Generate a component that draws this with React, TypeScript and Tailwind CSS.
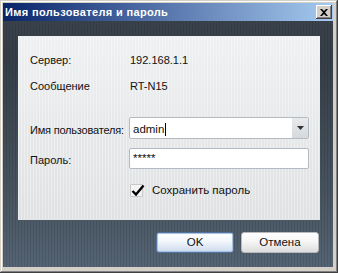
import React from "react";

export default function App() {
  return (
    <div
      className="w-[338px] h-[273px] bg-[#d4d0c8] flex flex-col pt-[3px] pl-[3px] pr-[5px] pb-[6px] shadow-[inset_-1px_-1px_0_#404040,inset_1px_1px_0_#d4d0c8,inset_-2px_-2px_0_#808080,inset_2px_2px_0_#ffffff]"
      style={{ fontFamily: '"Liberation Sans", Arial, sans-serif' }}
    >
      {/* Title bar */}
      <div className="h-[18px] flex items-center justify-between pl-[2px] pr-[1px] bg-[linear-gradient(to_right,#0a246a,#a6caf0)]">
        <span className="text-white font-bold text-[11px] tracking-[0.35px] leading-none">
          Имя пользователя и пароль
        </span>
        <div className="w-[16px] h-[14px] bg-[#d4d0c8] flex items-center justify-center shadow-[inset_-1px_-1px_0_#404040,inset_1px_1px_0_#ffffff,inset_-2px_-2px_0_#808080]">
          <svg width="8" height="7" viewBox="0 0 8 7">
            <path d="M0 0h2l2 2 2-2h2L5 3.5 8 7H6L4 5 2 7H0l3-3.5z" fill="#000" />
          </svg>
        </div>
      </div>

      {/* Dark textured area */}
      <div className="flex-1 flex flex-col pt-[15px] pl-[15px] bg-[repeating-linear-gradient(90deg,rgba(0,0,0,0.10)_0px,rgba(0,0,0,0.10)_1px,transparent_1px,transparent_3px),linear-gradient(to_bottom,#3a424b,#353e48_15%,#47545f_70%,#556474)]">
        {/* Light panel */}
        <div className="w-[302px] h-[184px] flex flex-col text-[11px] text-[#111] bg-[repeating-linear-gradient(90deg,rgba(255,255,255,0.35)_0px,rgba(255,255,255,0.35)_1px,transparent_1px,transparent_3px),linear-gradient(to_bottom,#eef0f1,#e6e8ea_50%,#dfe1e3)]">
          <div className="h-[16px] mt-[16px] flex items-center">
            <span className="w-[112px] shrink-0 pl-[12px]">Сервер:</span>
            <span>192.168.1.1</span>
          </div>
          <div className="h-[16px] mt-[10px] flex items-center">
            <span className="w-[112px] shrink-0 pl-[12px]">Сообщение</span>
            <span>RT-N15</span>
          </div>
          <div className="h-[22px] mt-[23px] flex items-center">
            <span className="w-[111px] shrink-0 pl-[12px] pt-[5px] whitespace-nowrap tracking-[-0.2px]">Имя пользователя:</span>
            <div className="w-[180px] h-[22px] bg-white border border-[#b4bac2] rounded-[2px] flex items-stretch">
              <div className="flex-1 flex items-center pl-[3px] pt-[3px] text-[11.5px]">
                admin<span className="inline-block w-[1px] h-[13px] bg-black ml-[1px]" />
              </div>
              <div className="w-[16px] bg-[linear-gradient(to_bottom,#e8eaec,#d6d9dc)] flex items-center justify-center">
                <svg width="7" height="4" viewBox="0 0 7 4">
                  <path d="M0 0h7L3.5 4z" fill="#333" />
                </svg>
              </div>
            </div>
          </div>
          <div className="h-[21px] mt-[9px] flex items-center">
            <span className="w-[111px] shrink-0 pl-[12px] pt-[4px]">Пароль:</span>
            <div className="w-[180px] h-[21px] bg-white border border-[#b4bac2] rounded-[2px] flex items-center pl-[3px] pt-[1px] text-[11.5px]">
              *****
            </div>
          </div>
          <div className="h-[13px] mt-[15px] flex items-center pl-[112px]">
            <div className="relative w-[13px] h-[13px] bg-[#f4f4f4] border border-[#c8c8c8] rounded-[1px]">
              <svg className="absolute left-[0px] top-[-1px]" width="14" height="13" viewBox="0 0 14 13">
                <path d="M1.5 7l3.5 3.5L12.5 1.5" stroke="#000" strokeWidth="2.4" fill="none" />
              </svg>
            </div>
            <span className="ml-[9px] text-[11.5px] pt-[1px]">Сохранить пароль</span>
          </div>
        </div>

        {/* Buttons */}
        <div className="mt-[12px] flex justify-end pr-[14px] gap-[7px] text-[11.5px] text-[#111]">
          <button className="w-[78px] h-[21px] rounded-[3px] border border-[#52729e] bg-[linear-gradient(to_bottom,#ffffff,#f2f6fb_45%,#cbdaee)] flex items-center justify-center shadow-[inset_0_0_0_1px_#a9c1e2]">
            OK
          </button>
          <button className="w-[78px] h-[21px] rounded-[3px] border border-[#b6b9bd] bg-[linear-gradient(to_bottom,#ffffff,#f6f6f6_45%,#dcdcdc)] flex items-center justify-center">
            Отмена
          </button>
        </div>
      </div>
    </div>
  );
}
